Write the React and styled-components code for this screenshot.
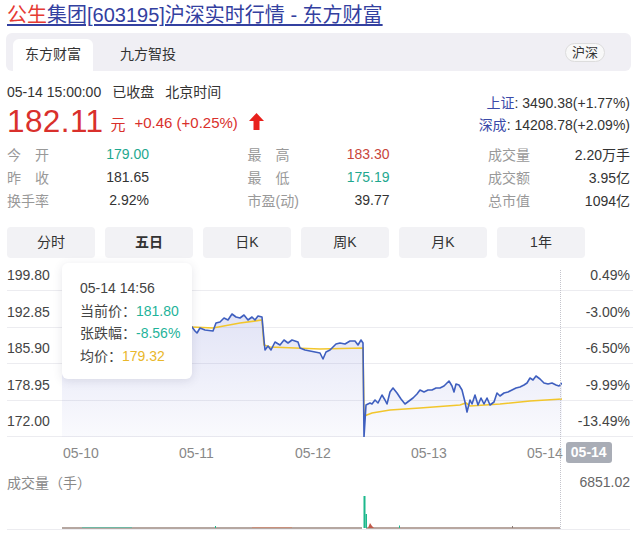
import styled, { createGlobalStyle } from 'styled-components'

const GlobalStyle = createGlobalStyle`
  body {
    margin: 0;
    background: #fff;
    font-family: "Liberation Sans", "Noto Sans CJK SC", sans-serif;
    color: #333;
  }
`

const stats = [
  [['今　开', '179.00', '#1fa88f'], ['最　高', '183.30', '#c8463c'], ['成交量', '2.20万手', '#333']],
  [['昨　收', '181.65', '#333'], ['最　低', '175.19', '#1fa88f'], ['成交额', '3.95亿', '#333']],
  [['换手率', '2.92%', '#333'], ['市盈(动)', '39.77', '#333'], ['总市值', '1094亿', '#333']],
]

const periods = ['分时', '五日', '日K', '周K', '月K', '1年']
const axis = [['199.80', '0.49%'], ['192.85', '-3.00%'], ['185.90', '-6.50%'], ['178.95', '-9.99%'], ['172.00', '-13.49%']]
const dates = ['05-10', '05-11', '05-12', '05-13']

// page coordinates, shifted into the plot's box when drawn
const price = [
  [62, 326], [70, 330], [80, 324], [90, 328], [100, 322], [110, 326], [120, 330], [130, 327], [140, 324],
  [150, 329], [160, 326], [170, 330], [180, 328], [190, 326], [192, 327], [195, 331], [197, 333], [200, 328],
  [205, 330], [213, 331], [216, 323], [220, 322], [224, 318], [228, 320], [232, 314], [236, 317], [240, 318],
  [244, 315], [248, 320], [252, 317], [255, 320], [258, 316], [262, 317], [264, 340], [265, 350], [268, 346],
  [271, 350], [275, 342], [280, 345], [284, 340], [288, 343], [292, 340], [298, 342], [300, 348], [305, 350],
  [310, 351], [315, 352], [320, 353], [323, 359], [326, 352], [330, 350], [336, 344], [340, 343], [345, 344],
  [350, 341], [355, 341], [358, 345], [361, 340], [363, 343], [364, 437], [366, 405], [368, 404], [370, 403],
  [372, 404], [375, 400], [378, 403], [382, 395], [385, 400], [387, 404], [390, 392], [393, 388], [397, 393],
  [401, 399], [405, 404], [409, 401], [413, 398], [417, 394], [420, 390], [424, 392], [428, 390], [432, 390],
  [436, 388], [440, 388], [444, 386], [449, 381], [452, 386], [454, 392], [456, 384], [459, 385], [462, 390],
  [465, 402], [467, 412], [470, 400], [472, 404], [475, 395], [478, 405], [481, 398], [484, 404], [487, 398],
  [490, 405], [494, 402], [497, 393], [500, 396], [504, 393], [508, 392], [512, 390], [516, 388], [520, 387],
  [524, 385], [527, 383], [530, 378], [533, 380], [536, 376], [540, 379], [544, 383], [548, 384], [552, 383],
  [556, 385], [559, 386], [562, 383],
]

const avg = [
  [62, 326], [120, 327], [192, 327], [213, 328], [240, 323], [262, 320], [264, 345], [270, 347], [320, 349],
  [363, 348], [364, 416], [372, 413], [390, 410], [420, 408], [460, 405], [466, 403], [470, 406], [500, 404],
  [530, 401], [562, 399],
]

const toPath = pts => pts.map(([x, y], i) => `${i ? 'L' : 'M'}${x - 62},${y - 262}`).join(' ')

export default function App() {
  return (
    <Page>
      <GlobalStyle />
      <Title><Red>公生</Red>集团[603195]沪深实时行情 - 东方财富</Title>

      <SourceBar>
        <Source $active>东方财富</Source>
        <Source>九方智投</Source>
        <Pill>沪深</Pill>
      </SourceBar>

      <QuoteHead>
        <div>
          <TimeRow>
            <span>05-14 15:00:00</span>
            <span>已收盘</span>
            <span>北京时间</span>
          </TimeRow>
          <PriceRow>
            <BigPrice>182.11</BigPrice>
            <Unit>元</Unit>
            <Change>+0.46 (+0.25%)</Change>
            <svg width="15" height="17" viewBox="0 0 15 17">
              <path d="M7.5 0 L15 8 L10.5 8 L10.5 17 L4.5 17 L4.5 8 L0 8 Z" fill="#e8201c" />
            </svg>
          </PriceRow>
        </div>
        <Indexes>
          <div><IndexName>上证</IndexName>: 3490.38(+1.77%)</div>
          <div><IndexName>深成</IndexName>: 14208.78(+2.09%)</div>
        </Indexes>
      </QuoteHead>

      <Stats>
        {stats.map((row, r) => row.map(([label, value, color]) => (
          <Stat key={r + label}>
            <StatLabel>{label}</StatLabel>
            <StatValue $color={color}>{value}</StatValue>
          </Stat>
        )))}
      </Stats>

      <Periods>
        {periods.map(p => <Period key={p} $active={p === '五日'}>{p}</Period>)}
      </Periods>

      <ChartSection>
        <Grid>
          {axis.map(([left, right], i) => (
            <AxisRow key={left} $first={i === 0}>
              <span>{left}</span>
              <span>{right}</span>
            </AxisRow>
          ))}
          <Plot width="500" height="175" viewBox="0 0 500 175">
            <defs>
              <linearGradient id="area" x1="0" y1="0" x2="0" y2="1">
                <stop offset="0%" stopColor="#7b83d6" stopOpacity="0.22" />
                <stop offset="100%" stopColor="#7b83d6" stopOpacity="0.04" />
              </linearGradient>
            </defs>
            <path d={`${toPath(price)} L500,175 L0,175 Z`} fill="url(#area)" />
            <path d={toPath(avg)} fill="none" stroke="#f2c62c" strokeWidth="1.6" />
            <path d={toPath(price)} fill="none" stroke="#3f5fbf" strokeWidth="1.6" strokeLinejoin="round" />
          </Plot>
        </Grid>

        <XAxis>
          {dates.map(d => <DateLabel key={d}>{d}</DateLabel>)}
          <span>05-14</span>
          <DateBadge>05-14</DateBadge>
        </XAxis>

        <VolumeHead>
          <span>成交量（手）</span>
          <VolumeMax>6851.02</VolumeMax>
        </VolumeHead>

        <Volume>
          <svg width="500" height="36" viewBox="0 0 500 36">
            <line x1="0" y1="35" x2="300" y2="35" stroke="#9c8a82" strokeWidth="1.4" />
            <line x1="304" y1="35" x2="498" y2="35" stroke="#a08a80" strokeWidth="1.4" />
            <line x1="20" y1="34.5" x2="70" y2="34.5" stroke="#6fb8a4" strokeWidth="1" />
            <line x1="190" y1="34.5" x2="230" y2="34.5" stroke="#c8907c" strokeWidth="1" />
            <rect x="301.5" y="3" width="2" height="32" fill="#1cb88c" />
            <rect x="303.5" y="21" width="1.5" height="14" fill="#1cb88c" />
            <path d="M306 35 L308 30 L310 33 L312 35 Z" fill="#c25a4a" />
            <rect x="153" y="33" width="1" height="2" fill="#1cb88c" />
            <rect x="337" y="32.5" width="1" height="2.5" fill="#1cb88c" />
            <rect x="450" y="33" width="1" height="2" fill="#8a7a74" />
          </svg>
        </Volume>

        <Crosshair />

        <Tooltip>
          <div>05-14 14:56</div>
          <div>当前价：<TipValue $color="#1fb39a">181.80</TipValue></div>
          <div>张跌幅：<TipValue $color="#1fb39a">-8.56%</TipValue></div>
          <div>均价：<TipValue $color="#e9b72a">179.32</TipValue></div>
        </Tooltip>
      </ChartSection>
    </Page>
  )
}

const Page = styled.div`
  width: 640px;
  height: 538px;
  box-sizing: border-box;
  padding: 2px 10px 0 7px;
  overflow: hidden;
`
const Title = styled.div`
  font-size: 20px;
  line-height: 26px;
  color: #3340a0;
  text-decoration: underline;
  text-underline-offset: 2px;
  white-space: nowrap;
`
const Red = styled.span`
  color: #e53a34;
`
const SourceBar = styled.div`
  margin: 5px -1px 0 -1px;
  height: 38px;
  box-sizing: border-box;
  padding: 6px 26px 0 7px;
  background: #f0eff4;
  border-radius: 6px;
  display: flex;
  align-items: flex-end;
  gap: 15px;
`
const Source = styled.div`
  height: 32px;
  line-height: 30px;
  padding: 0 12px;
  font-size: 14px;
  color: #333;
  background: ${p => (p.$active ? '#fff' : 'transparent')};
  border-radius: 6px 6px 0 0;
`
const Pill = styled.div`
  margin-left: auto;
  align-self: center;
  margin-top: -6px;
  font-size: 13px;
  line-height: 17px;
  padding: 0 6px;
  color: #333;
  border: 1px solid #ddd;
  border-radius: 10px;
  background: #f8f8f8;
`
const QuoteHead = styled.div`
  margin-top: 11px;
  display: flex;
  justify-content: space-between;
`
const TimeRow = styled.div`
  display: flex;
  gap: 11px;
  font-size: 14px;
  line-height: 20px;
  color: #333;
`
const PriceRow = styled.div`
  height: 38px;
  display: flex;
  align-items: center;
  color: #d9302c;
`
const BigPrice = styled.span`
  font-size: 31.5px;
  letter-spacing: 0.4px;
`
const Unit = styled.span`
  font-size: 15px;
  margin: 4px 9px 0 7px;
`
const Change = styled.span`
  font-size: 15px;
  margin: 2px 11px 0 0;
`
const Indexes = styled.div`
  margin-top: 10px;
  font-size: 14px;
  line-height: 22px;
  text-align: right;
  color: #333;
`
const IndexName = styled.span`
  color: #3a4aa8;
`
const Stats = styled.div`
  display: grid;
  grid-template-columns: repeat(3, 142px);
  grid-auto-rows: 23px;
  justify-content: space-between;
  margin-top: 2px;
`
const Stat = styled.div`
  display: flex;
  justify-content: space-between;
  align-items: center;
  font-size: 14px;
`
const StatLabel = styled.span`
  color: #999;
`
const StatValue = styled.span`
  color: ${p => p.$color};
`
const Periods = styled.div`
  margin-top: 16px;
  display: flex;
  gap: 10px;
`
const Period = styled.div`
  width: 88px;
  height: 31px;
  line-height: 31px;
  text-align: center;
  font-size: 14px;
  border-radius: 4px;
  background: #f2f2f5;
  color: #333;
  font-weight: ${p => (p.$active ? 'bold' : 'normal')};
`
const ChartSection = styled.div`
  position: relative;
  margin-top: 4px;
`
const Grid = styled.div`
  position: relative;
  margin-right: -3px;
`
const AxisRow = styled.div`
  height: ${p => (p.$first ? '29px' : '36.5px')};
  box-sizing: border-box;
  padding: 0 3px 7px 0;
  display: flex;
  justify-content: space-between;
  align-items: flex-end;
  border-bottom: 1px solid #ececf0;
  font-size: 14px;
  line-height: 16px;
  color: #444;
`
const Plot = styled.svg`
  position: absolute;
  left: 55px;
  top: 0;
`
const XAxis = styled.div`
  margin-top: 5px;
  height: 21px;
  padding-left: 56px;
  display: flex;
  align-items: center;
  font-size: 14px;
  color: #888;
`
const DateLabel = styled.span`
  width: 116px;
`
const DateBadge = styled.span`
  margin-left: 3px;
  padding: 0 5px;
  line-height: 21px;
  background: #a9adb6;
  color: #fff;
  font-weight: bold;
  border-radius: 3px;
`
const VolumeHead = styled.div`
  margin-top: 8px;
  height: 22px;
  display: flex;
  justify-content: space-between;
  align-items: center;
  font-size: 14px;
  color: #888;
`
const VolumeMax = styled.span`
  color: #666;
`
const Volume = styled.div`
  height: 36px;
  padding-left: 55px;
  border-bottom: 1px solid #ececf0;
  svg {
    display: block;
  }
`
const Crosshair = styled.div`
  position: absolute;
  left: 553px;
  top: 8px;
  bottom: 1px;
  border-left: 1px dotted #c4c4cc;
`
const Tooltip = styled.div`
  position: absolute;
  left: 55px;
  top: 1px;
  width: 130px;
  height: 116px;
  box-sizing: border-box;
  padding: 14px 0 0 18px;
  background: #fff;
  border-radius: 6px;
  box-shadow: 0 2px 10px rgba(60, 60, 90, 0.13);
  font-size: 14px;
  line-height: 22.7px;
  color: #444;
`
const TipValue = styled.span`
  color: ${p => p.$color};
`
